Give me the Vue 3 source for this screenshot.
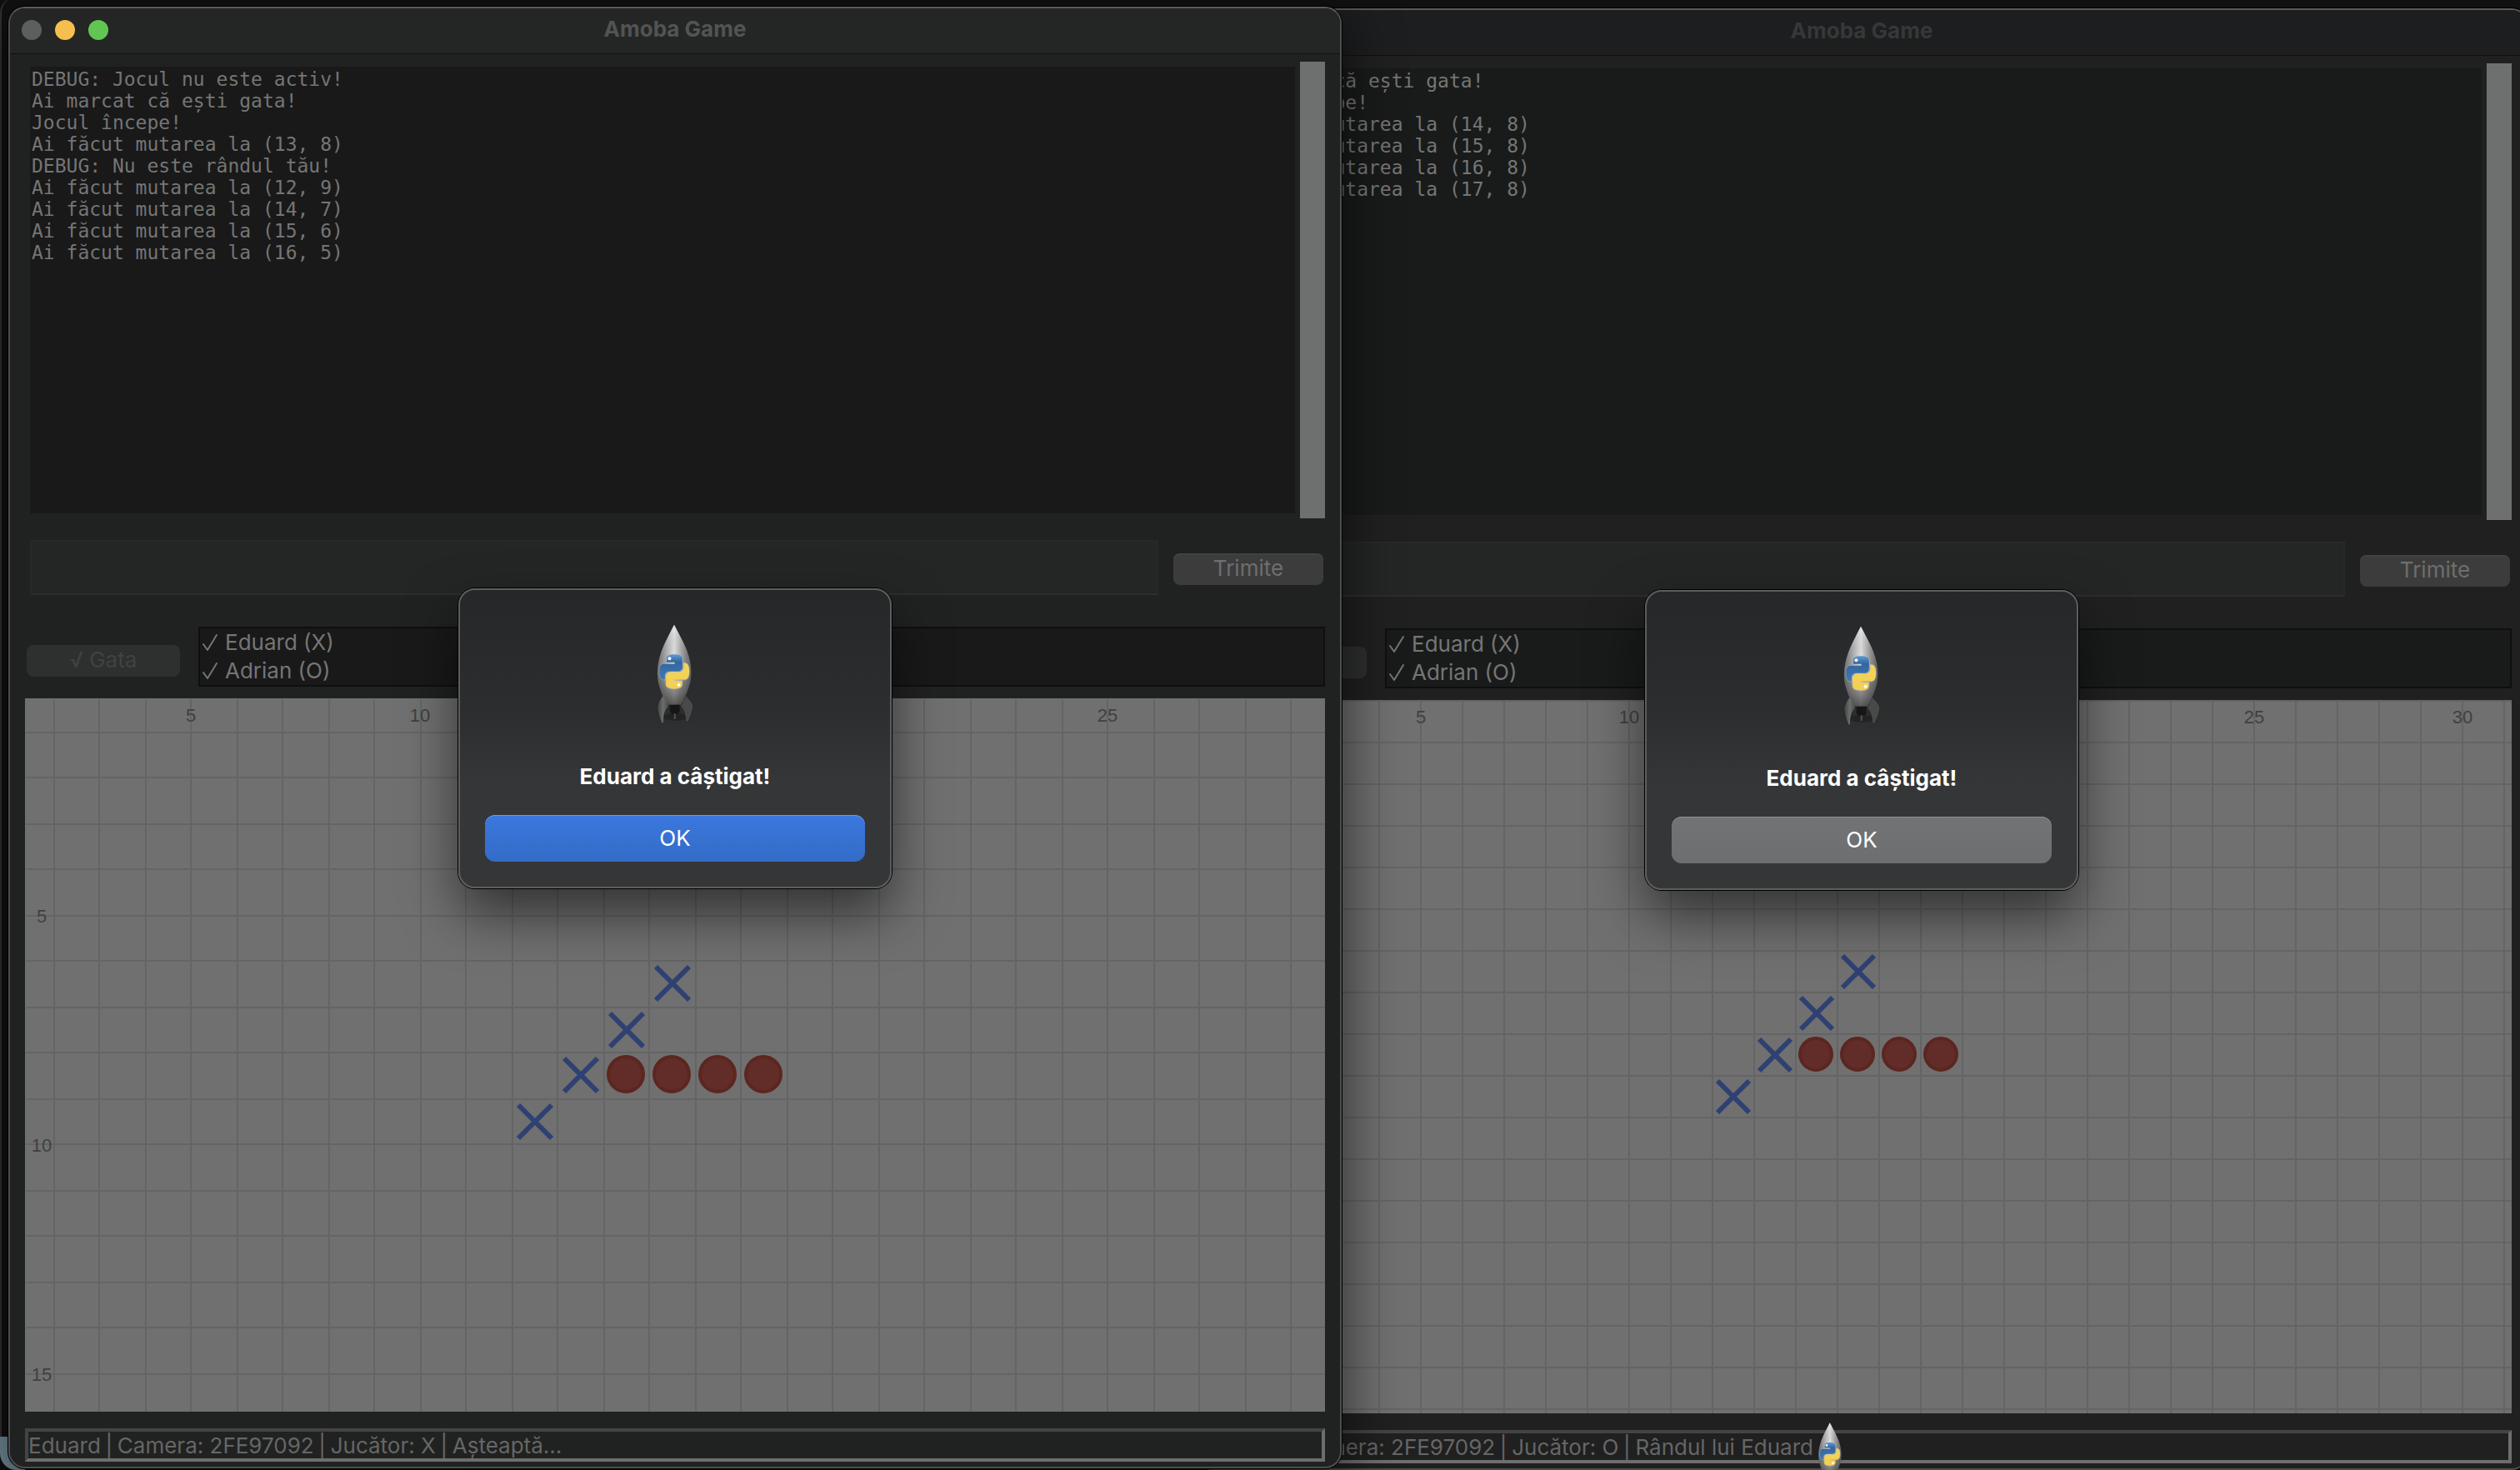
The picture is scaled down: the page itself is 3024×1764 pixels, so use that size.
<script setup>
const evens = (start, cell, count) =>
  Array.from({ length: count }, (_, i) => start + 2 * Math.floor((cell / 2) * i))

const windows = [
  {
    id: 'eduard',
    active: true,
    log: [
      'DEBUG: Jocul nu este activ!',
      'Ai marcat că ești gata!',
      'Jocul începe!',
      'Ai făcut mutarea la (13, 8)',
      'DEBUG: Nu este rândul tău!',
      'Ai făcut mutarea la (12, 9)',
      'Ai făcut mutarea la (14, 7)',
      'Ai făcut mutarea la (15, 6)',
      'Ai făcut mutarea la (16, 5)',
    ].join('\n'),
    status: ['Eduard', 'Camera: 2FE97092', 'Jucător: X', 'Așteaptă...'],
    cols: evens(34, 55, 40),
    rows: evens(40, 55, 24),
    top: [[5, 199], [10, 474], [15, 749], [20, 1024], [25, 1299]],
    side: [[5, 261], [10, 536], [15, 811]],
    arm: 20,
    radius: 21,
    crosses: [[777, 342], [722, 398], [667, 452], [612, 508]],
    noughts: [[721, 451], [776, 451], [831, 451], [886, 451]],
  },
  {
    id: 'adrian',
    active: false,
    log: [
      'Ai marcat că ești gata!',
      'Jocul începe!',
      'Ai făcut mutarea la (14, 8)',
      'Ai făcut mutarea la (15, 8)',
      'Ai făcut mutarea la (16, 8)',
      'Ai făcut mutarea la (17, 8)',
    ].join('\n'),
    status: ['Adrian', 'Camera: 2FE97092', 'Jucător: O', 'Rândul lui Eduard'],
    cols: evens(0, 50, 44),
    rows: evens(0, 50, 26),
    top: [[5, 251], [10, 501], [15, 751], [20, 1001], [25, 1251], [30, 1501]],
    side: [[5, 251], [10, 501], [15, 751]],
    arm: 19,
    radius: 19,
    crosses: [[776, 326], [726, 376], [676, 426], [626, 476]],
    noughts: [[725, 425], [775, 425], [825, 425], [875, 425]],
  },
]
const players = ['Eduard (X)', 'Adrian (O)']
</script>

<template>
  <main class="desktop">
    <svg class="defs" aria-hidden="true">
      <defs>
        <linearGradient id="hull" x1="0" x2="1" y1="0" y2="0">
          <stop offset="0" stop-color="#6d6d6d" />
          <stop offset="0.3" stop-color="#b4b4b4" />
          <stop offset="0.5" stop-color="#dedede" />
          <stop offset="0.75" stop-color="#9a9a9a" />
          <stop offset="1" stop-color="#5c5c5c" />
        </linearGradient>
        <linearGradient id="dusk" x1="0" x2="0" y1="0" y2="1">
          <stop offset="0" stop-color="#fff" stop-opacity="0.35" />
          <stop offset="0.35" stop-color="#888" stop-opacity="0" />
          <stop offset="1" stop-color="#222" stop-opacity="0.7" />
        </linearGradient>
        <linearGradient id="blue" x1="0" x2="0" y1="0" y2="1">
          <stop offset="0" stop-color="#5f9bd2" />
          <stop offset="0.3" stop-color="#34669f" />
          <stop offset="1" stop-color="#3f78b6" />
        </linearGradient>
        <linearGradient id="yellow" x1="0" x2="0" y1="0" y2="1">
          <stop offset="0" stop-color="#f3d45a" />
          <stop offset="1" stop-color="#f2cf52" />
        </linearGradient>
        <linearGradient id="fin" x1="0" x2="1" y1="0" y2="0">
          <stop offset="0" stop-color="#3c3d3d" />
          <stop offset="0.5" stop-color="#6c6d6d" />
          <stop offset="1" stop-color="#464747" />
        </linearGradient>
        <symbol id="rocket" viewBox="80 55 140 370">
          <ellipse cx="150" cy="396" rx="46" ry="14" fill="#000" opacity="0.22" />
          <path d="M131 348h36v28l-7 9h-22l-7-9z" fill="#161616" />
          <path d="M146 384h7v20h-7z" fill="#4b4b4b" />
          <path d="M107 316C96 332 86 344 85 360C87 384 94 402 102 420L109 418C108 392 112 370 128 358Z" fill="url(#fin)" stroke="#1d1d1d" stroke-width="2" />
          <path d="M190 316C201 332 217 344 217 358C213 384 204 402 196 416L189 414C188 392 184 370 170 358Z" fill="#484949" stroke="#1d1d1d" stroke-width="2" />
          <path d="M147 60C163 92 182 122 194 155C213 205 213 250 200 287C192 312 182 332 172 350H123C112 332 101 312 94 287C81 250 83 205 101 155C113 122 131 92 147 60Z" fill="url(#hull)" />
          <path d="M147 60C163 92 182 122 194 155C213 205 213 250 200 287C192 312 182 332 172 350H123C112 332 101 312 94 287C81 250 83 205 101 155C113 122 131 92 147 60Z" fill="url(#dusk)" />
          <g stroke="#d8dde2" stroke-opacity="0.35" stroke-width="5" stroke-linejoin="round" paint-order="stroke">
            <path d="M148 168C128 168 119 172 119 184V197H149V203H108C97 203 93 215 93 230C93 248 98 258 108 260H113V246C113 236 121 230 132 230H160C170 230 177 223 177 213V184C177 172 166 168 148 168Z" fill="url(#blue)" />
            <path d="M147 293C167 293 176 288 176 276V264H147V260H188C198 257 202 246 202 230C202 212 198 202 187 200H182V214C182 225 174 233 163 233H135C124 233 117 240 117 250V276C117 288 128 293 147 293Z" fill="url(#yellow)" />
          </g>
          <circle cx="130" cy="183" r="6" fill="#fff" />
          <circle cx="164" cy="279" r="6" fill="#fff" />
        </symbol>
      </defs>
    </svg>

    <div class="backdrop"></div>
    <div class="wallpaper"></div>

    <section v-for="w in windows" :key="w.id" class="window" :class="[w.id, { active: w.active }]">
      <header class="titlebar">
        <div v-if="w.active" class="lights">
          <button class="light close" aria-label="Close"></button>
          <button class="light minimize" aria-label="Minimize"></button>
          <button class="light zoom" aria-label="Zoom"></button>
        </div>
        <h1 class="title">Amoba Game</h1>
      </header>

      <div class="content">
        <div class="log-row">
          <textarea class="log" readonly aria-label="Log" :value="w.log"></textarea>
          <div class="scrollbar"></div>
        </div>

        <form class="row chat" @submit.prevent>
          <input class="message" type="text" aria-label="Message" />
          <button class="btn send" type="submit">Trimite</button>
        </form>

        <div class="row lobby">
          <button class="btn ready" type="button" disabled>√ Gata</button>
          <ul class="players">
            <li v-for="p in players" :key="p">
              <svg class="check" viewBox="0 0 20 22"><path d="M2 13L7 20L18 2" /></svg>
              <span>{{ p }}</span>
            </li>
          </ul>
        </div>

        <div class="board">
          <svg class="grid" width="100%" height="100%">
            <rect v-for="x in w.cols" :key="'c' + x" class="line" :x="x" y="1" width="2" height="100%" />
            <rect v-for="y in w.rows" :key="'r' + y" class="line" x="1" :y="y" width="100%" height="2" />
            <text v-for="[n, x] in w.top" :key="'t' + n" class="num" :x="x" y="28">{{ n }}</text>
            <text v-for="[n, y] in w.side" :key="'s' + n" class="num" x="20" :y="y + 8">{{ n }}</text>
            <path
              v-for="[x, y] in w.crosses"
              :key="'x' + x"
              class="cross"
              :d="`M${x - w.arm} ${y - w.arm}L${x + w.arm} ${y + w.arm}M${x + w.arm} ${y - w.arm}L${x - w.arm} ${y + w.arm}`"
            />
            <circle v-for="[x, y] in w.noughts" :key="'o' + x" class="nought" :cx="x" :cy="y" :r="w.radius" />
          </svg>
        </div>

        <footer class="status">
          <template v-for="(part, i) in w.status" :key="part">
            <span v-if="i" class="sep">|</span>
            <span>{{ part }}</span>
          </template>
        </footer>
      </div>

      <div class="dialog" role="alertdialog" :aria-labelledby="'msg-' + w.id">
        <svg class="rocket"><use href="#rocket" /></svg>
        <p :id="'msg-' + w.id" class="verdict">Eduard a câștigat!</p>
        <button class="ok" type="button">OK</button>
      </div>
    </section>

    <svg class="dock-rocket"><use href="#rocket" /></svg>
  </main>
</template>

<style>
body {
  margin: 0;
  background: #111;
}
</style>

<style scoped>
.desktop {
  position: relative;
  height: 100vh;
  overflow: hidden;
  background: #111;
  font-family: Inter, "Liberation Sans", sans-serif;
  font-size: 26px;
}
.defs {
  position: absolute;
  width: 0;
  height: 0;
}
.backdrop {
  position: absolute;
  inset: -4px auto 40px 0;
  width: 24px;
  border-left: 2px solid #333;
  border-top-left-radius: 20px;
  box-sizing: border-box;
}
.wallpaper {
  position: absolute;
  left: 0;
  bottom: 0;
  width: 30px;
  height: 40px;
  background: #76929f;
  border-bottom-left-radius: 20px;
}
.window {
  position: absolute;
  box-sizing: border-box;
  width: calc(50vw + 88px);
  display: flex;
  flex-direction: column;
  border: 2px solid #4d4e4d;
  border-top-color: #5a5b5a;
  border-radius: 20px;
}
.eduard {
  left: 10px;
  top: 8px;
  bottom: 2px;
  z-index: 2;
  background: #202221;
  box-shadow: 0 0 0 1px #000, 0 20px 60px 10px rgba(0, 0, 0, 0.5);
}
.adrian {
  left: calc(50vw - 78px);
  top: 10px;
  bottom: 0;
  background: #202020;
  box-shadow: 0 0 0 1px #000;
}
.titlebar {
  position: relative;
  display: flex;
  align-items: center;
  justify-content: center;
  box-sizing: border-box;
  height: 55px;
  padding-bottom: 4px;
  border-bottom: 1px solid #111;
  border-radius: 18px 18px 0 0;
  background: #1d1e20;
}
.active .titlebar {
  background: #242625;
}
.lights {
  position: absolute;
  left: 14px;
  top: 14px;
  display: flex;
  gap: 16px;
}
.light {
  width: 24px;
  height: 24px;
  padding: 0;
  border: 0;
  border-radius: 50%;
}
.close {
  background: #5d5f5e;
}
.minimize {
  background: #f5bf4f;
}
.zoom {
  background: #61c554;
}
.title {
  margin: 0;
  font-size: 26px;
  line-height: 32px;
  font-weight: 700;
  color: #363837;
}
.active .title {
  color: #525453;
}
.content {
  flex: 1;
  display: flex;
  flex-direction: column;
  min-height: 0;
  padding: 9px 18px 6px;
}
.log-row {
  display: flex;
  justify-content: space-between;
  gap: 6px;
}
.log {
  flex: 1;
  box-sizing: border-box;
  height: 536px;
  margin: 6px 0 6px 6px;
  padding: 2px 2px 0;
  border: 0;
  outline: 0;
  resize: none;
  overflow: hidden;
  background: #191b1a;
  color: #757575;
  font-family: "DejaVu Sans Mono", "Liberation Mono", monospace;
  font-size: 23px;
  line-height: 26px;
}
.active .log,
.active .players {
  background: #191919;
}
.scrollbar {
  width: 30px;
  background: #6e706f;
}
.row {
  display: flex;
  align-items: flex-end;
}
.chat {
  margin: 26px 2px 0 6px;
  gap: 18px;
}
.message {
  flex: 1;
  box-sizing: border-box;
  height: 66px;
  padding: 0 8px;
  border: 2px solid #272928;
  border-bottom-color: #2d2f2e;
  outline: 0;
  background: #242625;
  color: #757575;
  font: inherit;
}
.btn {
  height: 38px;
  margin: 0 0 12px;
  padding: 0 0 3px;
  border: 0;
  border-radius: 8px;
  background: #3c3c3c;
  box-shadow: inset 0 2px 0 #424242;
  color: #6e6e6e;
  font: inherit;
  line-height: 34px;
}
.send {
  width: 180px;
}
.ready {
  width: 184px;
  background: #2e302f;
  box-shadow: none;
  color: #404241;
}
.lobby {
  margin: 38px 0 0 2px;
  gap: 22px;
}
.players {
  flex: 1;
  box-sizing: border-box;
  height: 72px;
  margin: 0;
  padding: 0 2px;
  border: 2px solid #0f0f0f;
  list-style: none;
  background: #191b1a;
  color: #757575;
}
.players li {
  display: flex;
  align-items: center;
  gap: 8px;
  line-height: 34px;
}
.check {
  width: 20px;
  height: 22px;
  fill: none;
  stroke: #757575;
  stroke-width: 2;
  stroke-linecap: round;
  stroke-linejoin: round;
}
.board {
  flex: 1;
  min-height: 0;
  margin-top: 14px;
  overflow: hidden;
  background: #707070;
}
.grid {
  display: block;
}
.line {
  fill: #646464;
}
.num {
  fill: #404040;
  font-family: "Liberation Sans", Arial, sans-serif;
  font-size: 22px;
  text-anchor: middle;
}
.cross {
  fill: none;
  stroke: #2f4172;
  stroke-width: 6;
}
.nought {
  fill: #622d28;
  stroke: #5c2620;
  stroke-width: 4;
}
.status {
  display: flex;
  box-sizing: border-box;
  height: 40px;
  margin-top: 20px;
  border: 4px solid;
  border-color: #444 #6e6e6e #6e6e6e #444;
  line-height: 34px;
  white-space: nowrap;
  overflow: hidden;
  color: #666;
}
.sep {
  width: 20px;
  text-align: center;
}
.dialog {
  position: absolute;
  left: 50%;
  top: 696px;
  transform: translateX(-50%);
  box-sizing: border-box;
  width: 520px;
  display: flex;
  flex-direction: column;
  align-items: center;
  padding: 40px 30px 30px;
  border: 2px solid #5c5d5d;
  border-radius: 20px;
  background: linear-gradient(#262728, #2c2d2e 40%, #353637 65%, #353637);
  box-shadow: 0 0 0 1px #000, 0 30px 64px rgba(0, 0, 0, 0.55);
}
.rocket {
  width: 46px;
  height: 122px;
}
.verdict {
  margin: 46px 0 30px;
  font-size: 26px;
  line-height: 32px;
  font-weight: 700;
  color: #fff;
}
.ok {
  width: 100%;
  height: 56px;
  padding: 0 0 2px;
  border: 0;
  border-radius: 12px;
  background: linear-gradient(#727375, #6d6e70);
  box-shadow: inset 0 1px 0 #909192;
  color: #fff;
  font: inherit;
}
.active .ok {
  background: linear-gradient(#3b78de, #336bc6);
  box-shadow: inset 0 1px 0 #6a9ae8;
}
.dock-rocket {
  position: absolute;
  z-index: 3;
  left: calc(50vw + 669px);
  bottom: -24px;
  width: 31px;
  height: 82px;
}
</style>
